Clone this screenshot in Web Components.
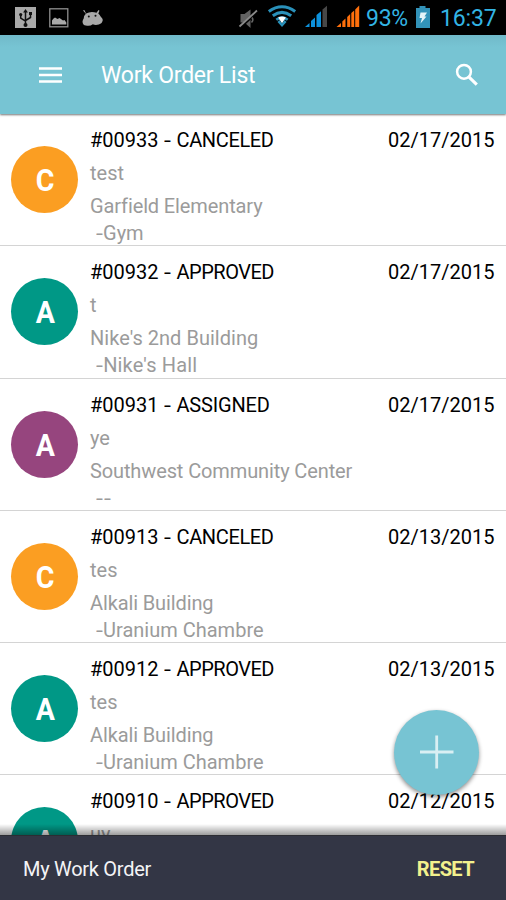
<!DOCTYPE html>
<html lang="en">
<head>
<meta charset="utf-8">
<title>Work Order List</title>
<style>
html,body{margin:0;height:100%;overflow:hidden;background:#fff}
body{font-family:Roboto,"Liberation Sans",sans-serif}
</style>
</head>
<body>
<work-app></work-app>
<script>
const define = (name, html, init) => customElements.define(name, class extends HTMLElement {
  connectedCallback() {
    if (this.shadowRoot) return;
    this.attachShadow({mode: 'open'}).innerHTML = html;
    if (init) init(this, this.shadowRoot);
  }
});

define('status-bar', `
<style>
:host{display:flex;height:35px;background:#000;color:#33b5e5;font-size:23px;line-height:37px;white-space:nowrap}
svg{display:block;width:366px;height:35px;flex:none}
.bat{width:16px;margin-left:7px}
.pct{width:42px;letter-spacing:-.3px}
.time{margin-left:9px;letter-spacing:-.15px}
</style>
<svg viewBox="0 0 366 35">
  <rect x="15" y="7" width="21" height="21" fill="#a9a9a9"/>
  <g stroke="#111" stroke-width="1.5" fill="none"><path d="M25.5 11v14M20.7 15v3.2l4.8 3M30.5 14v3.5l-5 3"/></g>
  <path d="M25.5 9l2.4 3.6h-4.8z" fill="#111"/><circle cx="25.5" cy="25" r="2" fill="#111"/><circle cx="20.7" cy="14.6" r="1.6" fill="#111"/><rect x="29" y="12" width="3" height="3" fill="#111"/>
  <rect x="49.8" y="8.8" width="18" height="18" fill="none" stroke="#8f8f8f" stroke-width="1.3"/>
  <path d="M52 24.500v-4q1-2 3-3l2.500 1.500 2-1 3.500 2.500 1.500-.5 1.800 2.500v2z" fill="#a9a9a9"/>
  <path d="M84.300 10l1.800 3.500Q91 10.800 96.500 12.800L98.500 10l1 .7-1.200 2.800q1.700 1.300 2.300 3 2.300 2 2.200 3.500-.5 3.500-4 4.500-3.300 1-6-.2-2.800 2.200-7 1.200-3-.2-3.300-3.700.2-2 1.200-3.300.2-3 2.200-4.700L83 10.600z" fill="#a9a9a9"/>
  <circle cx="88.800" cy="16.500" r="1" fill="#111"/><circle cx="95.500" cy="15.800" r="1" fill="#111"/>
  <path d="M240.500 14h4l6-4.500v18.500l-6-5.500h-4z" fill="#626262"/><path d="M240.500 27.500L258 11.500" stroke="#000" stroke-width="2"/><path d="M239.500 26.500L257 10.500" stroke="#8a8a8a" stroke-width="1.800"/>
  <path d="M252 17.500q2 2.500-.5 5" stroke="#666" fill="none" stroke-width="1.500"/>
  <g fill="none" stroke="#2a91ba" stroke-width="3"><path d="M268.800 11.500Q282 2 295.200 11.500"/><path d="M272.800 15.800Q282 9 291.200 15.800"/><path d="M276.300 19.800Q282 15.600 287.700 19.800" stroke-width="2.600"/></g>
  <path d="M278.200 17.500Q282 15.500 285.800 17.500L282 23.500z" fill="#fff"/><path d="M277.500 22l4.500 5 4.500-5-2-2-2.500 3.500-2.500-3.500z" fill="#2a91ba"/>
  <g fill="#0d91dc"><path d="M305 27l4.500-4v4z"/><path d="M311 27v-6l4-3.500V27z"/><path d="M316.500 27V15l4.500-3.800V27z"/></g><path d="M322.500 27V9.500l4.500-3.800V27z" fill="#474747"/>
  <g fill="#ff700c"><path d="M336.500 27l4.500-4v4z"/><path d="M342.300 27v-5.500l3.200-3V27z"/><path d="M347.200 27V17l3-3v13z"/><path d="M351.300 27V13l2.900-2.500V27z"/><path d="M355.200 27V9.500l4-4V27z"/></g>
</svg>
<span class="pct">93%</span>
<svg class="bat" viewBox="0 0 16 35"><path d="M1 8h3.500V6h6V8H15v20H1z" fill="#3292b8"/><path d="M5.500 12.500h6.500l-2.500 4h2L5.500 23.500l1.500-5.500H4.500z" fill="#e4f3f8"/></svg>
<span class="time">16:37</span>`);

define('app-bar', `
<style>
:host{display:flex;align-items:center;box-sizing:border-box;height:79px;padding:1px 27px 0 39px;background:linear-gradient(#70b9c9,#77c4d3 12px);color:#fff;box-shadow:0 1px 2px rgba(0,0,0,.55);position:relative;z-index:1}
.menu{width:23px;height:16px;margin-right:39px;flex:none}
.title{flex:1;font-size:23px;line-height:30px;padding-top:2px;white-space:nowrap;letter-spacing:-.23px}
.find{width:24px;height:24px}
</style>
<svg class="menu" viewBox="0 0 23 16"><path d="M0 1.500h23M0 8h23M0 14.500h23" stroke="#fff" stroke-width="2.500"/></svg>
<span class="title"><slot></slot></span>
<svg class="find" viewBox="0 0 24 24"><circle cx="9" cy="8.800" r="6.900" fill="none" stroke="#fff" stroke-width="2.500"/><path d="M13.800 13.800L21.800 21.600" stroke="#fff" stroke-width="3.100"/></svg>`);

define('status-badge', `
<style>
:host{display:flex;align-items:center;justify-content:center;width:67px;height:67px;border-radius:50%;background:var(--tone);color:#fff;font-size:31px;font-weight:700;flex:none}
span{line-height:38px;padding:3px 0 0 2px;transform:scaleX(.92)}
</style><span><slot></slot></span>`);

define('work-order', `
<style>
:host{display:flex;box-sizing:border-box;height:132.15px;padding:13px 11.500px 0 11px;border-bottom:1px solid #d4d4d4;font-size:20px;line-height:27px;color:#9b9b9b;white-space:nowrap;flex:none}
status-badge{margin:19px 12px 0 0}
.body{flex:1;display:flex;flex-direction:column;gap:6px}
.head{display:flex;justify-content:space-between;color:#000}
.dash{display:inline-block;transform:scaleX(1.25);transform-origin:0 50%;margin:0 1.700px 0 .8px}
.r{padding-left:6px}
.r .dash{margin:0 1.500px 0 0}
.r .dash + .dash{margin-left:1px}
</style>
<status-badge></status-badge>
<div class="body"><div class="head"><span class="t"></span><span class="d"></span></div><div class="n"></div><div class="place"><div class="p"></div><div class="r"></div></div></div>`,
(el, root) => {
  const [id, state, date, note, place, room] = el.getAttribute('order').split('|');
  const $ = s => root.querySelector(s);
  const dash = '<span class="dash">-</span>';
  const tight = {CANCELED: -.35, APPROVED: -.48, ASSIGNED: -.18}[state];
  $('status-badge').textContent = state[0];
  $('status-badge').style.setProperty('--tone', {CANCELED: '#fb9e22', APPROVED: '#009886', ASSIGNED: '#96457e'}[state]);
  $('.t').innerHTML = '#' + id + ' ' + dash + ' <span style="letter-spacing:' + tight + 'px">' + state + '</span>';
  $('.d').textContent = date;
  $('.n').textContent = note;
  if (!place) return $('.place').remove();
  $('.p').textContent = place;
  $('.p').style.letterSpacing = (place.startsWith('Nike') ? .03 : -.12) + 'px';
  $('.r').innerHTML = room.replace(/-/g, dash);
  if (room.includes('Hall')) $('.r').style.letterSpacing = '.15px';
});

define('add-button', `
<style>
:host{display:block;width:85px;height:85px;border-radius:50%;background:#77c4d3;box-shadow:0 2px 4px rgba(0,0,0,.45)}
svg{display:block}
</style>
<svg width="85" height="85" viewBox="0 0 85 85"><path d="M26 42h33.500M42.700 25.500v33" stroke="#d9eff3" stroke-width="2.800"/></svg>`);

define('bottom-bar', `
<style>
:host{display:flex;justify-content:space-between;align-items:center;box-sizing:border-box;height:65px;padding:1px 32px 0 23px;background:#333645;color:#f4f4f6;font-size:20px;border-top:1px solid #494b55;position:relative}
:host::before{content:"";position:absolute;left:0;right:0;bottom:100%;height:12px;background:linear-gradient(rgba(0,0,0,0),rgba(0,0,0,.42))}
b{color:#f3f18d;font-weight:700;letter-spacing:-.6px}
span{letter-spacing:-.28px}
</style><span>My Work Order</span><b>RESET</b>`);

define('work-app', `
<style>
:host{display:flex;flex-direction:column;width:506px;height:900px;position:relative;overflow:hidden;background:#fff}
main{flex:1;min-height:0;overflow:hidden;display:flex;flex-direction:column;padding-top:.27px}
add-button{position:absolute;left:394px;top:710px}
</style>
<status-bar></status-bar>
<app-bar>Work Order List</app-bar>
<main>
<work-order order="00933|CANCELED|02/17/2015|test|Garfield Elementary|-Gym"></work-order>
<work-order order="00932|APPROVED|02/17/2015|t|Nike's 2nd Building|-Nike's Hall"></work-order>
<work-order order="00931|ASSIGNED|02/17/2015|ye|Southwest Community Center|--"></work-order>
<work-order order="00913|CANCELED|02/13/2015|tes|Alkali Building|-Uranium Chambre"></work-order>
<work-order order="00912|APPROVED|02/13/2015|tes|Alkali Building|-Uranium Chambre"></work-order>
<work-order order="00910|APPROVED|02/12/2015|uy"></work-order>
</main>
<bottom-bar></bottom-bar>
<add-button></add-button>`);
</script>
</body>
</html>
